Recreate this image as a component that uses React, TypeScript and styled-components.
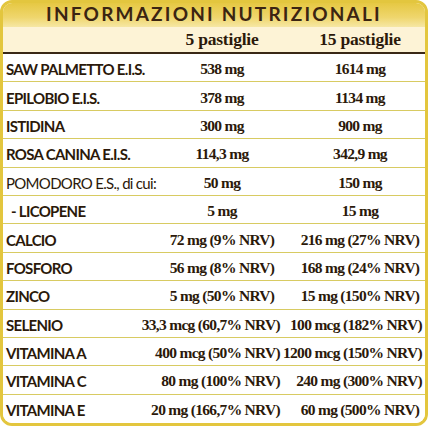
import React from "react";
import styled, { createGlobalStyle } from "styled-components";

const GlobalStyle = createGlobalStyle`
  html, body {
    margin: 0;
    padding: 0;
    background: #ffffff;
  }
`;

const Frame = styled.div`
  width: 428px;
  box-sizing: border-box;
  border: 3px solid #e3c63e;
  border-radius: 12px;
  overflow: hidden;
  background: #ffffff;
  color: #2b190a;
`;

const TitleBar = styled.div`
  height: 24px;
  display: flex;
  align-items: center;
  justify-content: center;
  padding-bottom: 3px;
  box-sizing: border-box;
  background: linear-gradient(180deg, #e6c843 0%, #efd66d 60%, #f6e7a4 100%);
  font-family: Lato, "Open Sans", sans-serif;
  font-weight: 700;
  font-size: 19px;
  letter-spacing: 2.2px;
  color: #3b2412;
`;

const Row = styled.div<{ $head?: boolean; $last?: boolean }>`
  display: grid;
  grid-template-columns: minmax(0, 1fr) 130px 124px;
  align-items: center;
  box-sizing: border-box;
  height: ${(p) => (p.$head ? "27px" : "28.4px")};
  padding: ${(p) => (p.$head ? "0 3px 0 3px" : "3px 3px 0 3px")};
  background: ${(p) => (p.$head ? "#fdf3d6" : "#ffffff")};
  border-bottom: ${(p) =>
    p.$head ? "2px solid #3a2816" : p.$last ? "none" : "1.5px solid #d8cb62"};
`;

const Name = styled.div<{ $light?: boolean; $indent?: boolean }>`
  font-family: Lato, "Open Sans", sans-serif;
  font-weight: ${(p) => (p.$light ? 400 : 700)};
  font-size: 15px;
  letter-spacing: -0.7px;
  white-space: nowrap;
  padding-left: ${(p) => (p.$indent ? "5px" : "0")};
`;

const Cell = styled.div<{ $inset?: number }>`
  display: flex;
  justify-content: flex-end;
  min-width: 0;
  padding-right: ${(p) => p.$inset ?? 0}px;
`;

const Value = styled.span<{ $span: number }>`
  flex: none;
  min-width: ${(p) => p.$span}px;
  text-align: center;
  white-space: nowrap;
  font-family: "Liberation Serif", "Times New Roman", serif;
  font-weight: 700;
  font-size: 15.5px;
  letter-spacing: -0.7px;
`;

const HeadValue = styled(Value)`
  font-size: 17.5px;
  letter-spacing: -0.2px;
`;

type Item = {
  name: string;
  a: string;
  b: string;
  light?: boolean;
  indent?: boolean;
};

const items: Item[] = [
  { name: "SAW PALMETTO E.I.S.", a: "538 mg", b: "1614 mg" },
  { name: "EPILOBIO E.I.S.", a: "378 mg", b: "1134 mg" },
  { name: "ISTIDINA", a: "300 mg", b: "900 mg" },
  { name: "ROSA CANINA E.I.S.", a: "114,3 mg", b: "342,9 mg" },
  { name: "POMODORO E.S., di cui:", a: "50 mg", b: "150 mg", light: true },
  { name: "- LICOPENE", a: "5 mg", b: "15 mg", indent: true },
  { name: "CALCIO", a: "72 mg (9% NRV)", b: "216 mg (27% NRV)" },
  { name: "FOSFORO", a: "56 mg (8% NRV)", b: "168 mg (24% NRV)" },
  { name: "ZINCO", a: "5 mg (50% NRV)", b: "15 mg (150% NRV)" },
  { name: "SELENIO", a: "33,3 mcg (60,7% NRV)", b: "100 mcg (182% NRV)" },
  { name: "VITAMINA A", a: "400 mcg (50% NRV)", b: "1200 mcg (150% NRV)" },
  { name: "VITAMINA C", a: "80 mg (100% NRV)", b: "240 mg (300% NRV)" },
  { name: "VITAMINA E", a: "20 mg (166,7% NRV)", b: "60 mg (500% NRV)" },
];

export default function App() {
  return (
    <>
      <GlobalStyle />
      <Frame>
        <TitleBar>INFORMAZIONI NUTRIZIONALI</TitleBar>
        <Row $head>
          <div />
          <Cell $inset={18}>
            <HeadValue $span={116}>5 pastiglie</HeadValue>
          </Cell>
          <Cell>
            <HeadValue $span={124}>15 pastiglie</HeadValue>
          </Cell>
        </Row>
        {items.map((it, i) => (
          <Row key={it.name} $last={i === items.length - 1}>
            <Name $light={it.light} $indent={it.indent}>
              {it.name}
            </Name>
            <Cell $inset={18}>
              <Value $span={116}>{it.a}</Value>
            </Cell>
            <Cell>
              <Value $span={124}>{it.b}</Value>
            </Cell>
          </Row>
        ))}
      </Frame>
    </>
  );
}
